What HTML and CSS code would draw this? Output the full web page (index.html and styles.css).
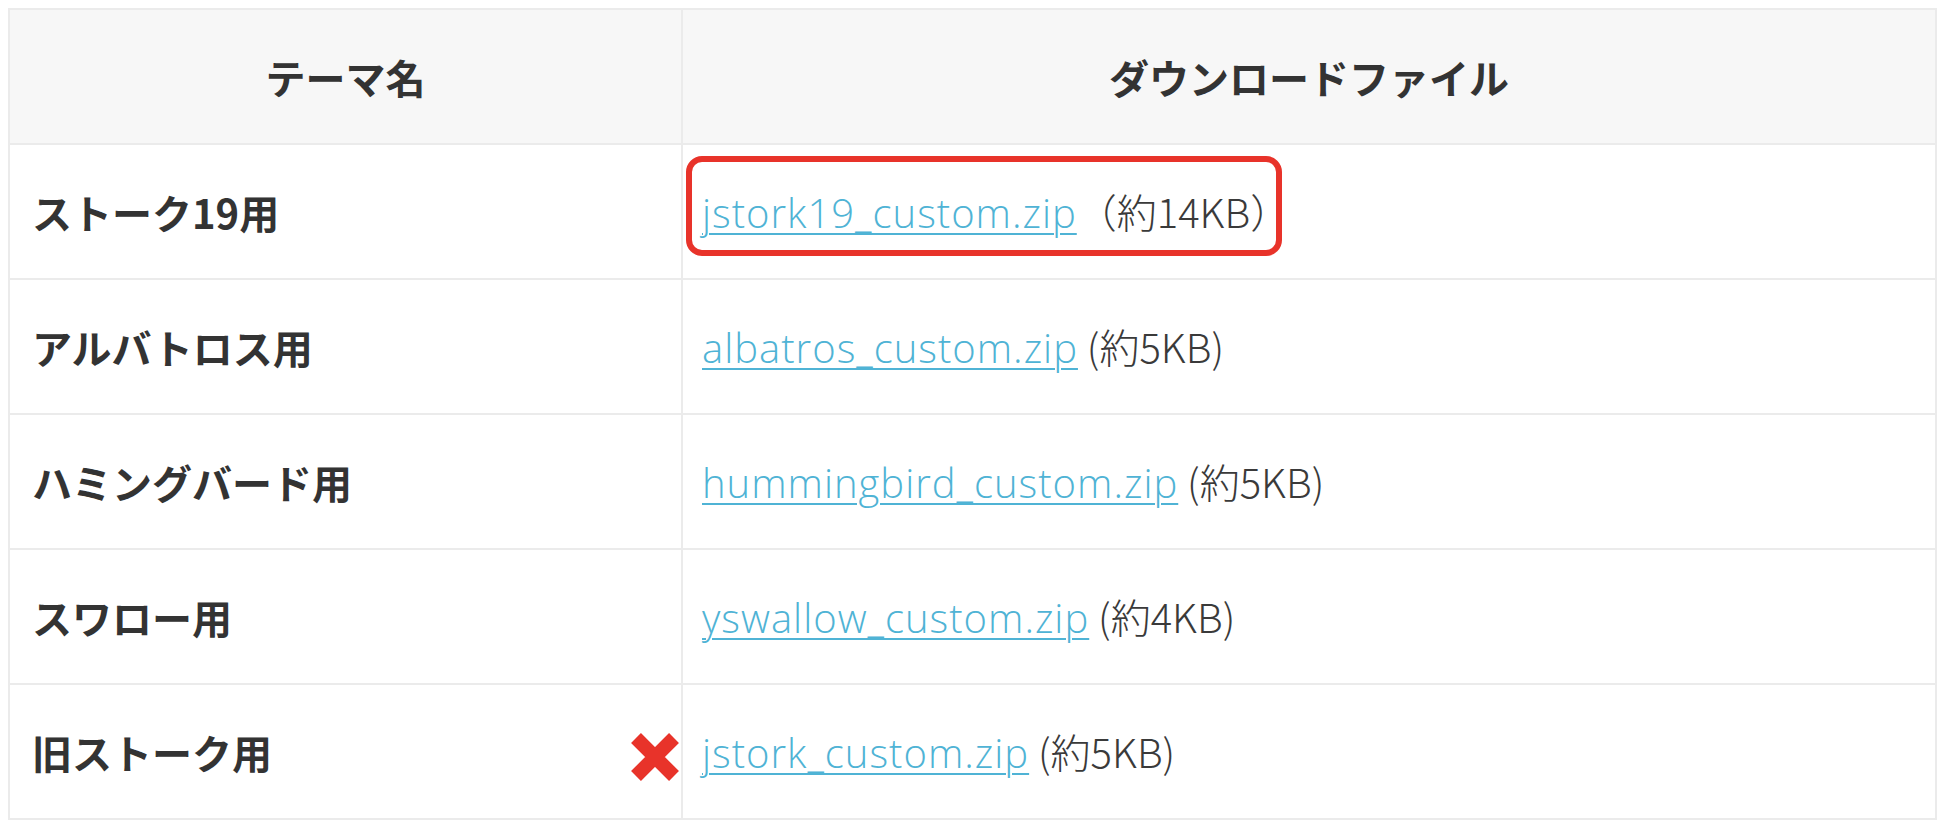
FILE: index.html
```html
<!DOCTYPE html>
<html lang="ja">
<head>
<meta charset="utf-8">
<title>テーマ別ダウンロードファイル</title>
<link rel="stylesheet" href="styles.css">
</head>
<body>
<table class="themes">
  <thead>
    <tr>
      <th class="col-name">テーマ名</th>
      <th class="col-file">ダウンロードファイル</th>
    </tr>
  </thead>
  <tbody>
    <tr>
      <td class="name">ストーク19用</td>
      <td class="file"><span class="highlight"><a href="#">jstork19_custom.zip</a><span class="size">（約14KB）</span></span></td>
    </tr>
    <tr>
      <td class="name">アルバトロス用</td>
      <td class="file"><a href="#">albatros_custom.zip</a> <span class="size">(約5KB)</span></td>
    </tr>
    <tr>
      <td class="name">ハミングバード用</td>
      <td class="file"><a href="#">hummingbird_custom.zip</a> <span class="size">(約5KB)</span></td>
    </tr>
    <tr>
      <td class="name">スワロー用</td>
      <td class="file"><a href="#">yswallow_custom.zip</a> <span class="size">(約4KB)</span></td>
    </tr>
    <tr>
      <td class="name old">旧ストーク用<svg class="xmark" viewBox="0 0 48 48" aria-hidden="true"><path d="M5 5 L43 43 M43 5 L5 43" stroke="#e8332a" stroke-width="14" stroke-linecap="butt" fill="none"/></svg></td>
      <td class="file"><a href="#">jstork_custom.zip</a> <span class="size">(約5KB)</span></td>
    </tr>
  </tbody>
</table>
</body>
</html>
```

FILE: styles.css
```css
html, body {
  margin: 0;
  padding: 0;
  background: #ffffff;
}

body {
  font-family: "Noto Sans CJK JP", "Noto Sans", sans-serif;
  color: #333333;
}

.themes {
  margin: 8px 0 0 8px;
  width: 1929px;
  border-collapse: collapse;
  table-layout: fixed;
  font-size: 40px;
}

.themes tr {
  height: 135px;
}

.themes th,
.themes td {
  box-sizing: border-box;
  border: 2px solid #ebebeb;
  padding: 0 22px;
  vertical-align: middle;
  line-height: 1.4;
}

.themes th {
  background: #f7f7f7;
  font-weight: 700;
  text-align: center;
}

.col-name {
  width: 673px;
}

.name {
  font-weight: 700;
  text-align: left;
}

.old {
  position: relative;
}

.xmark {
  position: absolute;
  right: 2px;
  top: 50%;
  width: 48px;
  height: 48px;
  margin-top: -19px;
}

.themes td.file {
  font-weight: 300;
  padding-left: 19px;
}

.file a {
  font-family: "Open Sans", "Noto Sans", "Noto Sans CJK JP", sans-serif;
  font-weight: 300;
  letter-spacing: 1px;
  color: #4fb3d5;
  text-decoration: underline;
  text-decoration-thickness: 2px;
  text-underline-offset: 5px;
}

.size {
  color: #3a3a3a;
}

.highlight {
  position: relative;
}

.highlight::after {
  content: "";
  position: absolute;
  left: -16px;
  right: 8px;
  top: -26px;
  bottom: -16px;
  border: 6px solid #e8332a;
  border-radius: 16px;
}
```
